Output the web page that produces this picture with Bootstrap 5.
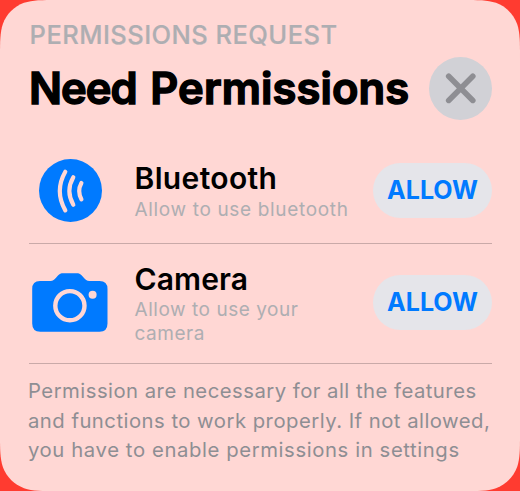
<!DOCTYPE html>
<html lang="en">
<head>
<meta charset="utf-8">
<meta name="viewport" content="width=device-width, initial-scale=1">
<title>Permissions Request</title>
<link href="https://cdn.jsdelivr.net/npm/bootstrap@5.3.0/dist/css/bootstrap.min.css" rel="stylesheet">
<style>
body { background: #ff3b30; font-family: Inter, "Liberation Sans", sans-serif; color: #000; overflow: hidden; }
.sheet { width: 520px; height: 491px; padding: 20px 28px 0 29px; background: #ffd7d4;
  clip-path: path("M0 58C0 41.4 0 33 2.85 24C6.4 14.2 14.2 6.4 24 2.85C33 0 41.4 0 58 0H462C478.6 0 487 0 496 2.85C505.8 6.4 513.6 14.2 517.15 24C520 33 520 41.4 520 58V433C520 449.6 520 458 517.15 467C513.6 476.8 505.8 484.6 496 488.15C487 491 478.6 491 462 491H58C41.4 491 33 491 24 488.15C14.2 484.6 6.4 476.8 2.85 467C0 458 0 449.6 0 433Z"); }
.eyebrow { font-size: 25.5px; line-height: 30px; font-weight: 550; color: #aeaeb2; letter-spacing: .45px; -webkit-text-stroke: .2px #aeaeb2; padding-left: .6px; }
.heading { margin-top: 7px; height: 63px; }
.heading h1 { font-size: 43.5px; line-height: 62px; font-weight: 600; letter-spacing: .1px; -webkit-text-stroke: 1.5px #000; stroke-linejoin: round; padding-bottom: 1px; }
.heading h1 span { letter-spacing: -1px; margin-right: 2.6px; }
.dismiss { width: 63px; height: 63px; background: #d1d1d6; }
.permission { border-bottom: 1px solid #c9a9a8; padding-bottom: 1px; }
.first-item { margin-top: 19px; height: 105px; }
.first-item .flex-grow-1 { padding-top: 2px; }
.second-item { height: 120px; padding-bottom: 2px; }
.second-item .flex-grow-1 { padding-top: 2px; }
.symbol { width: 82px; margin-right: 23.5px; }
.name { font-size: 30px; line-height: 34px; font-weight: 600; letter-spacing: .35px; margin-bottom: 3px; }
.second-item .name { letter-spacing: .1px; }
.detail { font-size: 19px; line-height: 24px; color: #aeaeb2; letter-spacing: .66px; }
.second-item .detail { letter-spacing: .54px; }
.second-item .name { margin-bottom: 2px; }
.allow, .allow:hover { width: 119px; height: 55px; background: #e5e5ea; color: #007aff; font-size: 25px; line-height: 55px; font-weight: 700; }
.note { margin: 12px -10px 0 -1px; font-size: 20.3px; line-height: 29.6px; color: #8e8e93; letter-spacing: .48px; }
.note span:last-child { letter-spacing: .6px; }
</style>
<script src="https://cdn.jsdelivr.net/npm/bootstrap@5.3.0/dist/js/bootstrap.bundle.min.js"></script>
</head>
<body>
<main class="sheet">
  <div class="eyebrow text-nowrap">PERMISSIONS REQUEST</div>
  <header class="heading d-flex align-items-center justify-content-between">
    <h1 class="m-0 text-nowrap"><span>Need</span> Permissions</h1>
    <button class="dismiss btn rounded-circle border-0 p-0 d-flex flex-shrink-0" aria-label="Close">
      <svg width="63" height="63" viewBox="0 0 63 63" fill="none" stroke="#8e8e93" stroke-width="5.6" stroke-linecap="round"><path d="M19.7 19.3 43.8 43.4M43.8 19.3 19.7 43.4"/></svg>
    </button>
  </header>
  <section class="permission first-item d-flex align-items-center">
    <div class="symbol d-flex justify-content-center flex-shrink-0">
      <svg width="63" height="63" viewBox="0 0 63 63"><circle cx="31.5" cy="31.5" r="31.5" fill="#007aff"/><path d="M26.3 12.8Q15.3 32 26.3 51.4M34.3 18.3Q26.4 32 34.3 45.7M42.4 24Q38 32 42.4 40.3" fill="none" stroke="#ffd7d4" stroke-width="4.2" stroke-linecap="round"/></svg>
    </div>
    <div class="flex-grow-1">
      <h2 class="name text-nowrap">Bluetooth</h2>
      <div class="detail text-nowrap">Allow to use bluetooth</div>
    </div>
    <button class="allow btn rounded-pill border-0 p-0 flex-shrink-0">ALLOW</button>
  </section>
  <section class="permission second-item d-flex align-items-center">
    <div class="symbol d-flex justify-content-center flex-shrink-0">
      <svg width="76" height="59" viewBox="0 0 76 59"><path d="M8 8H18.5C21 8 22.4 6.8 24 4.8L26 2.5C27.5.8 29 .3 31.3.3H44.5C46.8.3 48.3.8 49.8 2.5L51.8 4.8C53.4 6.8 54.8 8 57.3 8H67.5Q75.5 8 75.5 16V50.5Q75.5 58.7 67.5 58.7H8.3Q.2 58.7.2 50.5V16Q.2 8 8 8Z" fill="#007aff"/><circle cx="37.9" cy="32.7" r="14.6" fill="none" stroke="#ffd7d4" stroke-width="4.4"/><circle cx="60.6" cy="21.7" r="4" fill="#ffd7d4"/></svg>
    </div>
    <div class="flex-grow-1">
      <h2 class="name text-nowrap">Camera</h2>
      <div class="detail text-nowrap">Allow to use your<br>camera</div>
    </div>
    <button class="allow btn rounded-pill border-0 p-0 flex-shrink-0">ALLOW</button>
  </section>
  <p class="note text-nowrap"><span>Permission are necessary for all the features</span><br><span>and functions to work properly. If not allowed,</span><br><span>you have to enable permissions in settings</span></p>
</main>
</body>
</html>
